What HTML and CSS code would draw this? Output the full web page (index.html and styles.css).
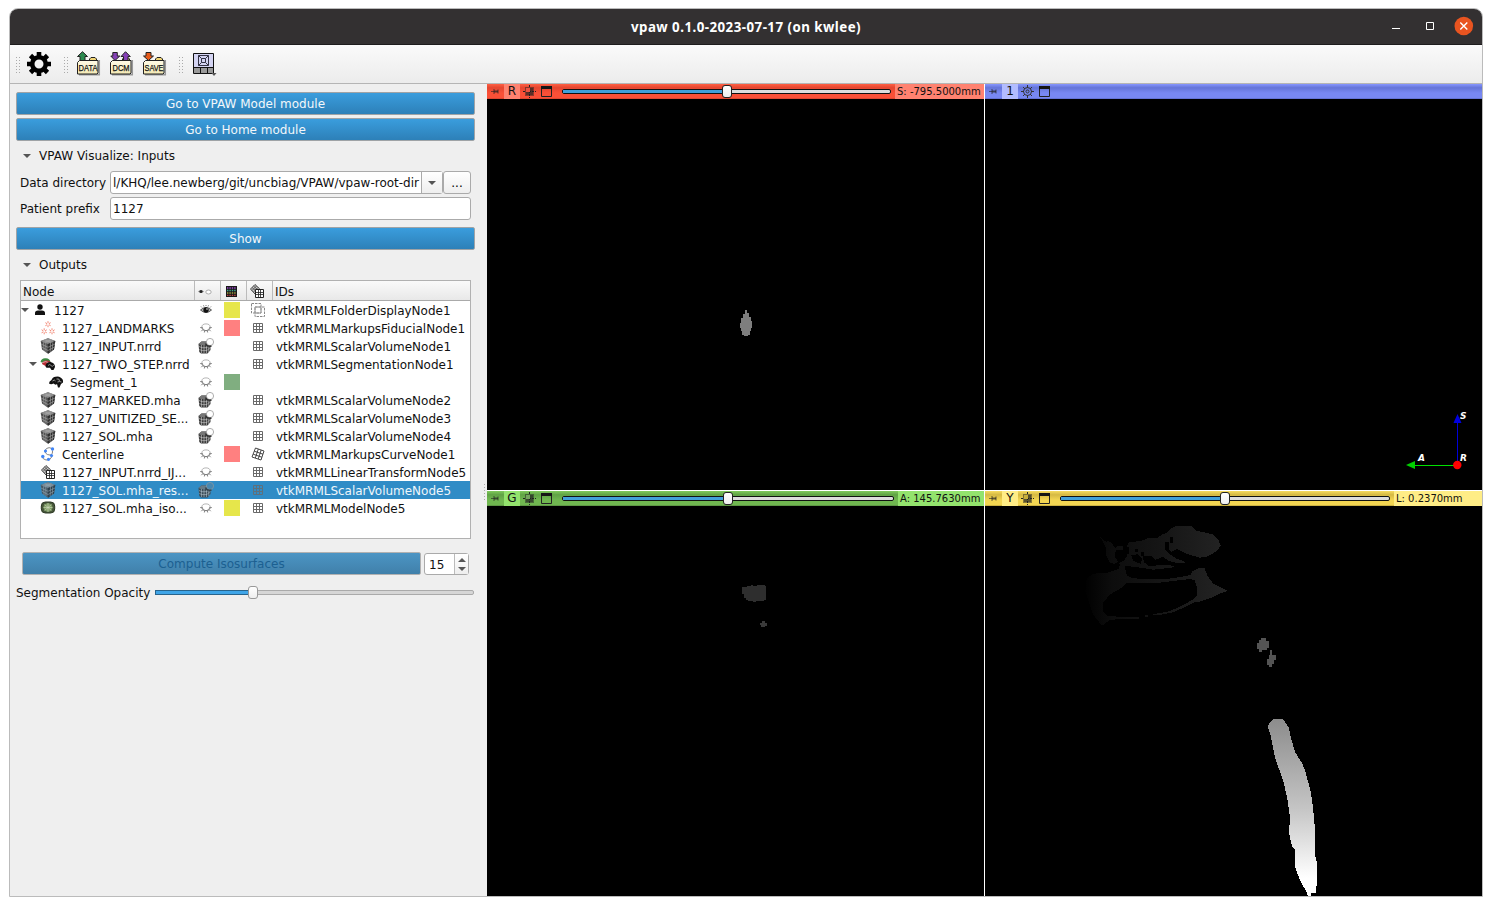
FILE: index.html
```html
<!DOCTYPE html>
<html lang="en">
<head>
<meta charset="utf-8">
<title>vpaw 0.1.0-2023-07-17 (on kwlee)</title>
<link rel="stylesheet" href="styles.css">
</head>
<body>
<svg class="sprite" width="0" height="0">
  <defs>
    <linearGradient id="folderFill" x1="0" y1="0" x2="0" y2="1"><stop offset="0" stop-color="#fffbe6"/><stop offset="1" stop-color="#f3e9b4"/></linearGradient>
    <symbol id="folder" viewBox="0 0 24 26">
      <path d="M2 23.800H22.300V9" fill="none" stroke="#999" stroke-width="1.500"/>
      <path d="M12.500 9.500v-1.500l1.500-1.500h4l1.500 1.500v1.500" fill="#f2d675" stroke="#222"/>
      <path d="M.5 11.500l2-2h18.500v12.500l-1 1h-19.500z" fill="url(#folderFill)" stroke="#222"/>
    </symbol>
    <symbol id="pin" viewBox="0 0 8 7"><path d="M0 3.500h3" stroke="#222" stroke-opacity=".6"/><path d="M3 1v5M7 1.500v4" stroke="#222" stroke-opacity=".7" fill="none"/><path d="M3 2.500h4v2H3z" fill="#222" fill-opacity=".7"/></symbol>
    <symbol id="win" viewBox="0 0 11 11"><path d="M.5.5h10v10H.5z" fill="none" stroke="#222"/><path d="M0 0h11v3H0z" fill="#151515"/></symbol>
    <symbol id="cross" viewBox="0 0 13 13"><path d="M6.500 0v13M0 6.500h13" stroke="#222" stroke-dasharray="2 1"/><path d="M2 2h9v9H2z" fill="#222" fill-opacity=".5"/><path d="M3 3h4v4H3z" fill="currentColor"/><path d="M7 3h3v7H3V7h4z" fill="#222" fill-opacity=".45"/></symbol>
    <symbol id="eye" viewBox="0 0 12 10"><path d="M.5 5Q6 0 11.500 5Q6 10 .5 5z" fill="#bbb" stroke="#555"/><circle cx="6" cy="5" r="2.700" fill="#111"/><path d="M2 2.500L1 1.500M4 1.500L3.500.3M6 1V0M8 1.500L8.500.3M10 2.500l1-1" stroke="#555" stroke-width=".8"/><circle cx="7" cy="4" r=".8" fill="#eee"/></symbol>
    <symbol id="closed" viewBox="0 0 12 10"><ellipse cx="6" cy="4.300" rx="4.200" ry="3.400" fill="#fff" stroke="#b5b5b5"/><path d="M2 4Q2.500 7.700 6 7.700T10 4M.2 4.500l1.800.3M1.300 8.200l1.400-1.400M4.300 9.500l.4-1.800M7.700 9.500l-.4-1.800M10.700 8.200L9.300 6.800M11.800 4.500L10 4.800" fill="none" stroke="#777" stroke-width=".9"/></symbol>
    <symbol id="cube" viewBox="0 0 16 16"><path d="M8 .3L15.300 3 14 11.500 8 15.700 2 11.500.7 3z" fill="#4d4d4d"/><path d="M8 .3L15.300 3 8 6 .7 3z" fill="#8d8d8d"/><path d="M8 6L15.300 3 14 11.500 8 15.700z" fill="#2e2e2e"/><path d="M1 6l7 3.300L15 6M1.500 9L8 12.500 14.500 9M3.500 4.200l.6 8.800M5.700 5l.3 9.300M10.500 5l-.3 9.300M12.800 4.200l-.6 8.800M4.500 1.600L11.500 4.500M11.500 1.600L4.500 4.500" stroke="#bbb" stroke-width=".5" fill="none"/></symbol>
    <symbol id="volvis" viewBox="0 0 16 16"><path d="M.5 6l3-2.500h9V12l-3 3.500H3L1.300 14z" fill="#3d3d3d"/><path d="M.5 6l3-2.500h9L9.500 7H3z" fill="#777"/><path d="M1 8.500l3 1.200h5l3-3M1.300 11.500L4 12.600h5l3-3M3.500 7v8M6 7v8M8.500 7v8M10.800 6v8" stroke="#ccc" stroke-width=".6" fill="none"/><circle cx="12" cy="4" r="3.600" fill="var(--ball,#fff)" stroke="#999" stroke-width=".8"/><path d="M7.500 5.500Q9 9.300 13.500 8" fill="none" stroke="#333" stroke-width="1.500"/></symbol>
    <symbol id="grid" viewBox="0 0 11 11"><path d="M.5.5h9v9H.5zM3.500 .5v9M6.500 .5v9M.5 3.500h9M.5 6.500h9" fill="none" stroke="#6a6a6a"/></symbol>
    <symbol id="warp" viewBox="0 0 14 14"><path d="M4.500 1l8.500 3-3 9-9-3zM7.300 2L4.300 11M10.200 3L7.200 12M3.300 4.200l8.700 3M2.200 7.200l8.700 3" fill="none" stroke="#333" stroke-width=".9"/></symbol>
    <symbol id="transform" viewBox="0 0 14 14"><path d="M5 .5L9.800 5 5 10 .5 5z" fill="#ccc" stroke="#444"/><path d="M2 3.500L7 8M3.500 2l5 4.500M2 6.500L6.500 2M3.500 8L8 3.500" stroke="#444" stroke-width=".8"/><path d="M5.500 5.500h8v8h-8z" fill="#fff" stroke="#222"/><path d="M8.500 5.500v8M10.500 5.500v8M5.500 8.500h8M5.500 10.500h8" stroke="#222" stroke-width=".8"/></symbol>
    <symbol id="folderGrid" viewBox="0 0 14 14"><path d="M.5.5h9.500v9.500H.5zM4 4h9.500v9.500H4z" fill="none" stroke="#888" stroke-dasharray="2.500 1"/><path d="M4 4h6v6H4z" fill="none" stroke="#999"/></symbol>
    <symbol id="person" viewBox="0 0 12 12"><circle cx="6" cy="3" r="2.700" fill="#111"/><path d="M1 11V9q0-2.500 3-2.500h4q3 0 3 2.500v2z" fill="#111"/></symbol>
    <symbol id="brain" viewBox="0 0 15 12"><path d="M.5 7.500Q.5 5 3 4 4 1 7 .8 10 0 12 1.500 15 3 14.500 6.500L12.500 8 11 11.500H9.500L8.500 8Q7 9.500 5 7.500 2.500 9 .5 7.500z" fill="#111"/><path d="M4 5q2-2 3 0M8 3q3-1 3 2M9 6q2-1 4 0" stroke="#bbb" stroke-width=".8" fill="none"/></symbol>
    <symbol id="seg" viewBox="0 0 15 13"><path d="M0 4Q1 0 5 .3 9 0 10 4L6 6z" fill="#3c8b43"/><path d="M1.500 6Q2 2 7 2.500 11 3 11 7L5 8z" fill="#b82a32"/><path d="M2 4.500q3-2 7 .5" stroke="#fff" stroke-width=".6" fill="none"/><path d="M5 8.500Q5 4 10 4 14.500 5 14.500 9L13 12h-2L9.500 9.800 6 9.800z" fill="#111"/><path d="M7.500 7.500q2-2 3 0t3-.5" fill="none" stroke="#bbb" stroke-width=".7"/></symbol>
    <g id="star" stroke="#f07c68" stroke-width=".9" fill="none"><path d="M0-3v2M0 3V1M-2.600-1.500l1.700 1M2.600-1.500l-1.700 1M-2.600 1.500l1.700-1M2.600 1.500l-1.700-1"/></g>
    <symbol id="marks" viewBox="0 0 14 14"><use href="#star" x="7" y="3.200"/><use href="#star" x="3.200" y="10.300"/><use href="#star" x="11" y="10.300"/></symbol>
    <symbol id="curve" viewBox="0 0 14 14"><path d="M11 1.500Q8-.2 5.500 1.500T4.500 6Q6 8 9 8t1 3q-1.500 2.500-5 2T1.500 9M11.500 3.500q.5 3-1.500 4.500" fill="none" stroke="#777" stroke-width=".9"/><circle cx="11.500" cy="2" r="1.700" fill="#4285f4"/><circle cx="4.500" cy="4" r="1.600" fill="#4285f4"/><circle cx="10.500" cy="8.500" r="1.600" fill="#4285f4"/><circle cx="1.800" cy="9.500" r="1.700" fill="#4285f4"/><circle cx="7.500" cy="12.300" r="1.600" fill="#4285f4"/></symbol>
    <symbol id="model" viewBox="0 0 15 14"><rect x=".8" y="1" width="13.400" height="11" rx="4" fill="#47573a" stroke="#2c3824"/><ellipse cx="7.500" cy="6.500" rx="4.500" ry="4.200" fill="#7f9c66"/><path d="M7.500 2v9M3 6.500h9M4 3.500l7 6M11 3.500l-7 6" stroke="#d0ddc0" stroke-width=".6"/></symbol>
  </defs>
</svg>
<div class="window">
  <header class="titlebar">
    <span class="title">vpaw 0.1.0-2023-07-17 (on kwlee)</span>
    <svg class="controls" width="88" height="36" viewBox="1390 9 88 36"><path d="M1392 28.500h8" stroke="#fff"/><path d="M1426.500 22.500h7v7h-7z" fill="none" stroke="#fff"/><circle cx="1463.800" cy="26" r="9.300" fill="#e95420"/><path d="M1460.300 22.500l7 7m0-7l-7 7" stroke="#fff" stroke-width="1.400"/></svg>
  </header>
  <nav class="toolbar">
    <i class="grip"></i>
    <svg class="gear" width="24" height="24" viewBox="-12 -12 24 24"><circle r="6.800" fill="none" stroke="#000" stroke-width="4.600"/><path d="M0-12v4M0 8v4M-12 0h4M8 0h4M-8.500-8.500l3 3M5.500 5.500l3 3M8.500-8.500l-3 3M-5.500 5.500l-3 3" stroke="#000" stroke-width="4.600"/></svg>
    <i class="grip grip-b"></i>
    <svg class="tool" width="24" height="26"><use href="#folder"/><path d="M5.500.7l5 4.800H8v4H3v-4H.5z" fill="#2c8a50" stroke="#222"/><text x="1.500" y="20" textLength="19" lengthAdjust="spacingAndGlyphs">DATA</text></svg>
    <svg class="tool" width="24" height="26"><use href="#folder"/><path d="M5 9.500L.8 5h2V1.500h4.500V5h2.500zM15.500.7l4.800 4.800H18v4h-4.500v-4H11z" fill="#8540b5" stroke="#222"/><text x="2.500" y="20" textLength="17" lengthAdjust="spacingAndGlyphs">DCM</text></svg>
    <svg class="tool" width="24" height="26"><use href="#folder"/><path d="M5.500 9.500L.5 5H3V1.500h5V5h2.500z" fill="#e65a1b" stroke="#222"/><text x="1.500" y="20" textLength="19" lengthAdjust="spacingAndGlyphs">SAVE</text></svg>
    <i class="grip grip-c"></i>
    <svg class="layout" width="24" height="24" viewBox="193 54 24 24"><path d="M193.500 54.500h20v20h-20z" fill="#d4d4f2" stroke="#111"/><path d="M194 69h19v5h-19z" fill="#999"/><path d="M193.500 68.500h20M200.500 69v5M207.500 69v5" stroke="#111"/><path d="M198.500 56.500h10v10h-10zM201.500 59.500h4v4h-4zM198.500 56.500l3 3M208.500 56.500l-3 3M198.500 66.500l3-3M208.500 66.500l-3-3" fill="none" stroke="#334"/><path d="M211.500 74h5l-2.500 3z" fill="#555"/></svg>
  </nav>
  <main class="main">
    <section class="panel">
      <button class="btn">Go to VPAW Model module</button>
      <button class="btn">Go to Home module</button>
      <h2 class="section inputs"><i class="arrow"></i>VPAW Visualize: Inputs</h2>
      <div class="field"><label>Data directory</label><div class="combo"><span class="path"><span>l/KHQ/lee.newberg/git/uncbiag/VPAW/vpaw-root-dir</span></span><span class="drop"><i class="arrow"></i></span></div><button class="dots">...</button></div>
      <div class="field"><label>Patient prefix</label><div class="input">1127</div></div>
      <button class="btn show">Show</button>
      <h2 class="section outputs"><i class="arrow"></i>Outputs</h2>
      <div class="tree">
        <div class="row head"><span>Node</span><span><svg width="14" height="7" viewBox="0 0 14 7"><path d="M0 3.500Q3 1 6 3.500 3 6 0 3.500" fill="#888"/><circle cx="3" cy="3.500" r="1.500" fill="#222"/><ellipse cx="10.500" cy="4" rx="2.700" ry="2" fill="#fff" stroke="#aaa"/></svg></span><span><svg width="11" height="11" viewBox="0 0 11 11"><path fill="#181818" d="M0 0h11v11H0z"/><path d="M1 2h9" stroke="#a04ad0" stroke-width="1.300" stroke-dasharray="1.400 1"/><path d="M1 4.500h9" stroke="#3fa890" stroke-width="1.300" stroke-dasharray="1.400 1"/><path d="M1 7h9" stroke="#a5a040" stroke-width="1.300" stroke-dasharray="1.400 1"/><path d="M1 9.300h9" stroke="#c04545" stroke-width="1.300" stroke-dasharray="1.400 1"/></svg></span><span><svg width="14" height="14"><use href="#transform"/></svg></span><span>IDs</span></div>
        <div class="row"><span class="node"><i class="arrow"></i><svg width="16" height="12"><use href="#person"/></svg>1127</span><span><svg width="12" height="10"><use href="#eye"/></svg></span><span><i class="sw yellow"></i></span><span><svg width="14" height="14"><use href="#folderGrid"/></svg></span><span>vtkMRMLFolderDisplayNode1</span></div>
        <div class="row"><span class="node child"><svg width="16" height="14"><use href="#marks"/></svg>1127_LANDMARKS</span><span><svg width="12" height="10"><use href="#closed"/></svg></span><span><i class="sw pink"></i></span><span><svg class="g" width="11" height="11"><use href="#grid"/></svg></span><span>vtkMRMLMarkupsFiducialNode1</span></div>
        <div class="row"><span class="node child"><svg width="16" height="16"><use href="#cube"/></svg>1127_INPUT.nrrd</span><span><svg width="16" height="16"><use href="#volvis"/></svg></span><span></span><span><svg class="g" width="11" height="11"><use href="#grid"/></svg></span><span>vtkMRMLScalarVolumeNode1</span></div>
        <div class="row"><span class="node child parent"><i class="arrow"></i><svg width="16" height="13"><use href="#seg"/></svg>1127_TWO_STEP.nrrd</span><span><svg width="12" height="10"><use href="#closed"/></svg></span><span></span><span><svg class="g" width="11" height="11"><use href="#grid"/></svg></span><span>vtkMRMLSegmentationNode1</span></div>
        <div class="row"><span class="node grandchild"><svg width="16" height="12"><use href="#brain"/></svg>Segment_1</span><span><svg width="12" height="10"><use href="#closed"/></svg></span><span><i class="sw green"></i></span><span></span><span></span></div>
        <div class="row"><span class="node child"><svg width="16" height="16"><use href="#cube"/></svg>1127_MARKED.mha</span><span><svg width="16" height="16"><use href="#volvis"/></svg></span><span></span><span><svg class="g" width="11" height="11"><use href="#grid"/></svg></span><span>vtkMRMLScalarVolumeNode2</span></div>
        <div class="row"><span class="node child"><svg width="16" height="16"><use href="#cube"/></svg>1127_UNITIZED_SE...</span><span><svg width="16" height="16"><use href="#volvis"/></svg></span><span></span><span><svg class="g" width="11" height="11"><use href="#grid"/></svg></span><span>vtkMRMLScalarVolumeNode3</span></div>
        <div class="row"><span class="node child"><svg width="16" height="16"><use href="#cube"/></svg>1127_SOL.mha</span><span><svg width="16" height="16"><use href="#volvis"/></svg></span><span></span><span><svg class="g" width="11" height="11"><use href="#grid"/></svg></span><span>vtkMRMLScalarVolumeNode4</span></div>
        <div class="row"><span class="node child"><svg width="16" height="14"><use href="#curve"/></svg>Centerline</span><span><svg width="12" height="10"><use href="#closed"/></svg></span><span><i class="sw pink"></i></span><span><svg width="14" height="14"><use href="#warp"/></svg></span><span>vtkMRMLMarkupsCurveNode1</span></div>
        <div class="row"><span class="node child"><svg width="16" height="14"><use href="#transform"/></svg>1127_INPUT.nrrd_IJ...</span><span><svg width="12" height="10"><use href="#closed"/></svg></span><span></span><span><svg class="g" width="11" height="11"><use href="#grid"/></svg></span><span>vtkMRMLLinearTransformNode5</span></div>
        <div class="row selected"><span class="node child"><svg width="16" height="16"><use href="#cube"/></svg>1127_SOL.mha_res...</span><span><svg width="16" height="16"><use href="#volvis"/></svg></span><span></span><span><svg class="g" width="11" height="11"><use href="#grid"/></svg></span><span>vtkMRMLScalarVolumeNode5</span></div>
        <div class="row"><span class="node child"><svg width="16" height="14"><use href="#model"/></svg>1127_SOL.mha_iso...</span><span><svg width="12" height="10"><use href="#closed"/></svg></span><span><i class="sw yellow"></i></span><span><svg class="g" width="11" height="11"><use href="#grid"/></svg></span><span>vtkMRMLModelNode5</span></div>
      </div>
      <div class="compute"><button class="btn disabled">Compute Isosurfaces</button><div class="spin"><span>15</span><span class="steps"><i class="arrow up"></i><i class="arrow"></i></span></div></div>
      <div class="opacity"><label>Segmentation Opacity</label><div class="slider"><i class="fill"></i><i class="handle"></i></div></div>
    </section>
    <i class="splitter"></i>
    <section class="views">
      <article class="view red">
        <div class="bar"><svg class="pin" width="8" height="7"><use href="#pin"/></svg><b>R</b><svg class="ic" width="13" height="13"><use href="#cross"/></svg><svg class="ic win" width="11" height="11"><use href="#win"/></svg><div class="slider"><i class="fill"></i><i class="handle"></i></div><span class="value">S: -795.5000mm</span></div>
        <svg class="scene" viewBox="487 99 497 391" shape-rendering="crispEdges"><path d="M746 310h1v3h2v4h2v4h1v7h-1v3h-1v4h-2v1h-4v-1h-2v-4h-1v-3h-1v-5h1v-5h2v-4h2v-4z" fill="#7e7e7e"/></svg>
      </article>
      <article class="view blue">
        <div class="bar"><svg class="pin" width="8" height="7"><use href="#pin"/></svg><b>1</b><svg class="ic" width="13" height="13" viewBox="0 0 13 13"><circle cx="6.500" cy="6.500" r="4" fill="none" stroke="#333"/><circle cx="6.500" cy="6.500" r="1.500" fill="none" stroke="#333"/><path d="M6.500 0v3M6.500 10v3M0 6.500h3M10 6.500h3M2 2l2 2M9 9l2 2M11 2L9 4M4 9l-2 2" stroke="#333"/></svg><svg class="ic win" width="11" height="11"><use href="#win"/></svg></div>
        <svg class="scene" viewBox="985 99 497 391"><path d="M1457.500 464V422" stroke="#0000d8"/><path d="M1453.500 423l4-9 4 9z" fill="#0000e0"/><path d="M1457 465.500h-43" stroke="#00e000"/><path d="M1415 461l-9 4 9 4z" fill="#00d000"/><circle cx="1457.300" cy="465" r="4.200" fill="#f00"/><text x="1460" y="419">S</text><text x="1418" y="461">A</text><text x="1460" y="461">R</text></svg>
      </article>
      <article class="view green">
        <div class="bar"><svg class="pin" width="8" height="7"><use href="#pin"/></svg><b>G</b><svg class="ic" width="13" height="13"><use href="#cross"/></svg><svg class="ic win" width="11" height="11"><use href="#win"/></svg><div class="slider"><i class="fill"></i><i class="handle"></i></div><span class="value">A: 145.7630mm</span></div>
        <svg class="scene" viewBox="487 506 497 390" shape-rendering="crispEdges"><path d="M742 587h5v-1h4v-1h2v1h4v-1h8v1h1v14h-2v1h-8v1h-3v-1h-5v-1h-2v-2h-2v-4h-2z" fill="#2e2e2e"/><path d="M762 621h3v2h2v3h-2v1h-4v-2h-1v-2h2z" fill="#3a3a3a"/></svg>
      </article>
      <article class="view yellow-v">
        <div class="bar"><svg class="pin" width="8" height="7"><use href="#pin"/></svg><b>Y</b><svg class="ic" width="13" height="13"><use href="#cross"/></svg><svg class="ic win" width="11" height="11"><use href="#win"/></svg><div class="slider"><i class="fill"></i><i class="handle"></i></div><span class="value">L: 0.2370mm</span></div>
        <svg class="scene" viewBox="985 506 497 390" shape-rendering="crispEdges">
          <defs><linearGradient id="skull" gradientUnits="userSpaceOnUse" x1="40" y1="0" x2="470" y2="0"><stop offset="0" stop-color="#000"/><stop offset=".2" stop-color="#0d0d0d"/><stop offset=".6" stop-color="#171717"/><stop offset="1" stop-color="#242424"/></linearGradient><linearGradient id="airway" x1="0" y1="0" x2="0" y2="1"><stop offset="0" stop-color="#8c8c8c"/><stop offset=".5" stop-color="#c4c4c4"/><stop offset=".9" stop-color="#fff"/></linearGradient></defs>
          <g transform="translate(1070 515) scale(.33333)" fill="url(#skull)" fill-rule="evenodd">
            <path d="M91 67L108 80 116 78 126 85 136 100 140 94 160 94 158 104 138 106 134 124 144 140 134 147 118 142 108 118 108 98z"/>
            <path d="M170 92L180 80 196 80 218 76 232 70 264 68 276 58 290 54 300 42 316 34 364 34 376 46 410 54 430 58 446 76 452 92 440 108 414 124 390 128 360 120 336 110 322 102 304 110 298 106 297 80 284 80 286 104 300 118 318 130 340 138 345 144 320 144 296 138 276 124 270 130 256 134 246 124 224 122 218 126 222 142 238 154 270 150 312 152 312 157 250 164 210 158 164 152 170 180 186 190 240 192 290 192 330 186 362 180 366 170 384 160 404 160 412 182 430 206 450 216 474 228 450 236 420 250 390 260 372 262 340 278 310 292 274 299 248 300 248 297 274 294 300 288 340 270 368 254 380 244 382 220 374 196 360 192 310 198 260 204 200 203 168 205 150 222 120 238 100 262 98 288 114 304 207 306 207 311 120 314 96 332 70 300 46 230 50 190 70 176 110 174 146 162 150 150 146 144 160 138 172 124zM184 120L190 138 212 146 216 132 204 118zM196 102v8h8v-8zM212 110v12h10v-12zM300 66v18h8V66zM178 96v20h-8V96z"/>
            <path d="M225 300h9v5h-9z"/>
          </g>
          <path fill="#545454" d="M1261 638h5v3h3v7h-2v2h-5v2h-3v-3h-2v-6h2v-3h2zM1270 650h2v5h4v5h-2v4h-2v3h-3v-2h-2v-6h2v-4h1z"/>
          <path fill="url(#airway)" d="M1273 719L1282 719 1285 722 1289 728 1291 738 1295 752 1302 763 1305 770 1311 793 1313 807 1315 830 1315 855 1317 863 1317 880 1316 893 1311 893 1311 896 1308 896 1307 893 1300 880 1295 867 1295 850 1292 846 1289 833 1290 817 1287 797 1283 780 1275 758 1273 747 1270 733 1268 728 1269 723z"/>
        </svg>
      </article>
    </section>
  </main>
</div>
</body>
</html>
```
FILE: styles.css
```css
* { box-sizing: border-box; }
body { margin: 0; width: 1492px; height: 906px; background: #fff; padding: 8px 9px 0; overflow: hidden; font: 12px "DejaVu Sans", sans-serif; color: #111; }
.sprite { display: block; position: absolute; }
svg { display: block; flex: none; }
i { display: block; flex: none; }
button { font: inherit; padding: 0; }
.window { width: 1474px; height: 889px; border: 1px solid #bbb; border-radius: 9px 9px 0 0; overflow: hidden; background: #efefef; display: flex; flex-direction: column; }
.titlebar { height: 36px; background: #333031; border-bottom: 1px solid #1e1c1d; display: grid; grid-template-columns: 88px 1fr 88px; flex: none; }
.title { grid-column: 2; text-align: center; color: #fff; font: bold 13.3px/36px "Noto Sans", sans-serif; letter-spacing: .47px; }
.controls { margin-left: -4px; }
.toolbar { height: 39px; flex: none; display: flex; align-items: center; background: linear-gradient(#fafafa, #ececec); border-bottom: 1px solid #b5b5b5; padding-left: 5px; }
.grip { width: 6px; height: 17px; margin-right: -2px; background: radial-gradient(circle, #aaa 0 .6px, transparent .8px) 0 0/3px 3px; }
.gear { margin-left: 8px; }
.toolbar .grip-b { margin: 0 8px 0 12px; }
.tool { margin: 0 9px 0 0; overflow: visible; }
.toolbar .grip-c { margin: 0 9px 0 2px; }
.tool text { font: 9.5px "Liberation Sans", sans-serif; fill: #111; stroke: #111; stroke-width: .25px; }
.layout { margin-top: 2px; }
.main { flex: 1; display: flex; min-height: 0; }
.panel { width: 473px; padding: 8px 8px 0 6px; display: flex; flex-direction: column; align-items: flex-start; }
.splitter { width: 4px; height: 17px; margin-top: 399px; background: radial-gradient(circle, #aaa 0 .6px, transparent .8px) 0 0/3px 3px; }
.btn { width: 459px; height: 23px; flex: none; border: 1px solid #9fa3a6; border-radius: 2px; background: linear-gradient(#3a9ddd, #2d80b8); color: #f2f7fa; margin-bottom: 3px; text-align: center; }
.arrow { width: 0; height: 0; border: 4px solid transparent; border-top-color: #555; border-bottom: 0; }
.arrow.up { border-top: 0; border-bottom: 4px solid #555; }
.section { margin: 0; font: inherit; height: 27px; display: flex; align-items: center; gap: 8px; padding-left: 7px; }
.inputs { height: 23px; margin-bottom: 4px; }
.field { display: flex; height: 23px; width: 459px; margin-bottom: 3px; padding-left: 4px; align-items: center; }
.field label { width: 90px; }
.combo, .input, .spin, .dots { height: 23px; border: 1px solid #aaa; border-radius: 3px; background: #fff; display: flex; }
.combo { width: 333px; }
.path { width: 310px; flex: none; padding-left: 1px; overflow: hidden; line-height: 22px; display: flex; justify-content: flex-end; padding-right: 2px; white-space: nowrap; }
.drop { border-left: 1px solid #aaa; flex: 1; display: flex; align-items: center; justify-content: center; background: linear-gradient(#fff, #eee); }
.dots { width: 28px; justify-content: center; align-items: center; background: linear-gradient(#fff, #eee); }
.input { width: 361px; padding-left: 2px; line-height: 23px; }
.show { margin-top: 4px; }
.outputs { height: 24px; margin-bottom: 3px; }
.tree { margin-left: 4px; width: 451px; height: 259px; border: 1px solid #b1b1b1; background: #fff; overflow: hidden; flex: none; }
.row { display: grid; grid-template-columns: 174px 26px 26px 26px 1fr; height: 18px; line-height: 20px; align-items: center; white-space: nowrap; }
.row > span { height: 18px; }
.row > span:nth-child(n+2):nth-child(-n+4) { width: 22px; display: flex; justify-content: center; align-items: center; }
.row > span:last-child { padding-left: 3px; letter-spacing: -.01px; }
.row .g { margin-left: 1px; }
.head { height: 20px; background: linear-gradient(#fafafa, #e8e8e8); border-bottom: 1px solid #aaa; }
.row.head > span { height: 19px; line-height: 22px; align-items: center; border-left: 1px solid #bbb; margin-left: -1px; width: auto; padding-left: 2px; }
.row.head > span:nth-child(n+2):nth-child(-n+4) { width: auto; padding-right: 8px; padding-top: 1px; }
.row.head > span:first-child { padding-left: 2px; }
.node { display: flex; align-items: center; padding-left: 11px; padding-top: 2px; }
.node svg { margin: -2px 6px 0 0; }
.node .arrow { margin-top: -2px; }
.row:nth-child(2) .node { padding-left: 0; }
.row:nth-child(2) .node svg { margin-left: 3px; margin-right: 6px; }
.node.child { padding-left: 19px; }
.node.grandchild { padding-left: 27px; }
.node.parent { padding-left: 8px; }
.parent .arrow { margin-right: 3px; }
.sw { width: 16px; height: 16px; }
.yellow { background: #e6e64b; }
.pink { background: #ff8080; }
.green.sw { background: #80ae80; }
.selected { background: #308cc6; color: #eef6fb; --ball: #4c87ac; }
.selected svg { opacity: .8; }
.compute { display: flex; margin: 13px 0 0 6px; gap: 3px; }
.disabled { width: 399px; margin: 0; background: linear-gradient(#4c95c4, #4080aa); color: #1c6091; border-color: #b1b1b1; }
.spin { width: 45px; height: 22px; margin-top: 1px; line-height: 22px; }
.spin > span:first-child { width: 29px; padding-left: 4px; }
.steps { border-left: 1px solid #bbb; flex: 1; display: flex; flex-direction: column; justify-content: center; align-items: center; gap: 5px; background: linear-gradient(#fff, #eee); }
.opacity { display: flex; align-items: center; height: 14px; margin-top: 10px; }
.opacity label { width: 139px; white-space: nowrap; padding-top: 2px; }
.slider { position: relative; height: 5px; border: 1px solid #aaa; border-radius: 2px; background: #d6d6d6; }
.opacity .slider { width: 319px; }
.fill { height: 3px; background: #3fa5e8; width: 97px; box-shadow: 0 0 0 1px #28648c; }
.handle { position: absolute; left: 92px; top: -5px; width: 10px; height: 13px; border: 1px solid #999; border-radius: 3px; background: linear-gradient(#fff, #eee); }
.views { width: 995px; display: grid; grid-template-columns: 497px 497px; grid-template-rows: 406px 405px; gap: 1px; background: #fff; }
.view { background: #000; min-width: 0; display: flex; flex-direction: column; }
.bar { height: 15px; flex: none; display: flex; align-items: center; background: var(--bar); font-size: 10px; }
.bar b { width: 16px; height: 15px; line-height: 15px; font-weight: normal; font-size: 12px; text-align: center; background: var(--light); margin: 0 3px 0 5px; }
.pin { margin-left: 4px; }
.ic { color: var(--mid); }
.win { margin: 0 0 0 5px; }
.bar .slider { margin-left: 10px; flex: 1; border-color: #111; background: #ddd; }
.bar .fill { width: 164px; box-shadow: none; background: #419fd9; }
.bar .handle { left: 159px; border-color: #222; }
.green .bar .handle { left: 160px; }
.value { height: 15px; line-height: 15px; background: var(--light); margin-left: 4px; padding-left: 2px; width: var(--vw); white-space: nowrap; }
.red { --bar: linear-gradient(#ff6044, #e44630 25%, #fa5037 60%, #fa5037 90%, #cf422d); --light: #ff8270; --mid: #ee5140; --vw: 89px; }
.blue { --bar: linear-gradient(#8796ff, #6575d8 25%, #7888f2 60%, #7888f2 90%, #5c6ac8); --light: #b2bcff; }
.view.green { --bar: linear-gradient(#80ca5c, #60a345 25%, #70b750 60%, #70b750 90%, #55883f); --light: #93e36d; --mid: #75a65e; --vw: 86px; }
.yellow-v { --bar: linear-gradient(#f7dc60, #d5b944 25%, #f3d652 60%, #f3d652 90%, #baa23c); --light: #ffed86; --mid: #c9ae3b; --vw: 88px; }
.scene { width: 497px; flex: 1; min-height: 0; }
.scene text { font: italic bold 9px "DejaVu Sans", sans-serif; fill: #fff; }
```
